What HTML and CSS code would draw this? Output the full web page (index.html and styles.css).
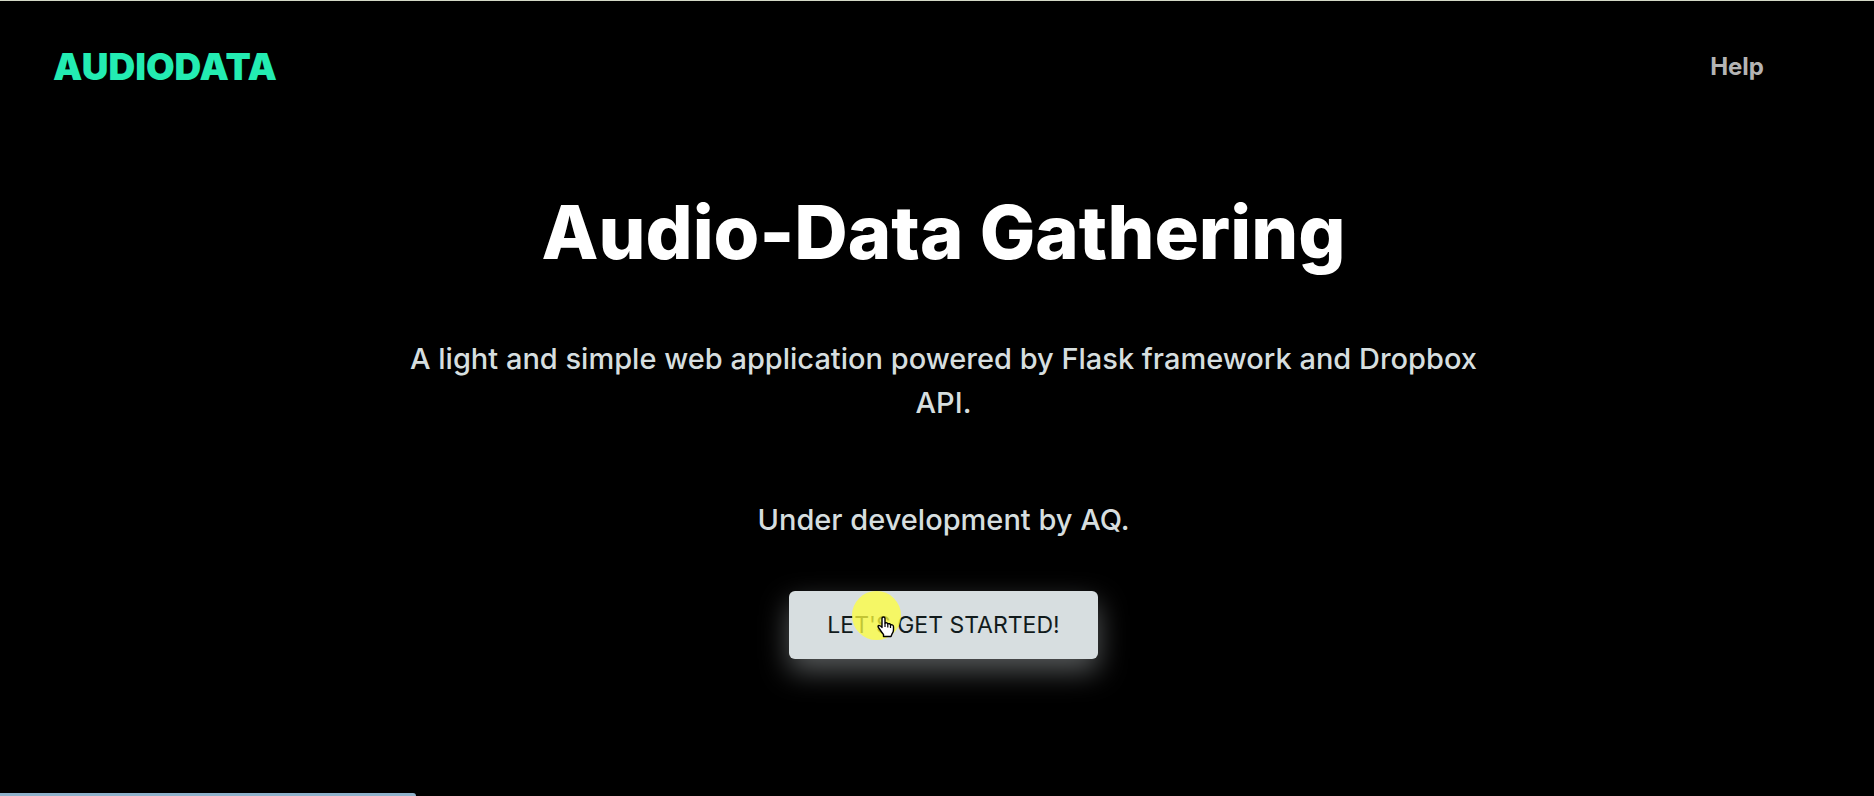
FILE: index.html
```html
<!DOCTYPE html>
<html lang="en">
<head>
<meta charset="utf-8">
<meta name="viewport" content="width=device-width, initial-scale=1">
<title>Audio-Data Gathering</title>
<link rel="stylesheet" href="styles.css">
</head>
<body>
<header class="header">
  <a class="logo" href="#">AUDIODATA</a>
  <nav class="nav"><a class="nav-link" href="#">Help</a></nav>
</header>
<main class="hero">
  <h1 class="title">Audio-Data Gathering</h1>
  <p class="lead">A light and simple web application powered by Flask framework and Dropbox API.</p>
  <p class="lead">Under development by AQ.</p>
  <div class="action">
    <button class="start" type="button">LET'S GET STARTED!</button>
    <span class="halo"></span>
    <svg class="pointer" width="18" height="22" viewBox="0 0 18 22" aria-hidden="true">
      <path d="M6.500 1C7.600 1 8 1.800 8 2.600V7c1.300-.6 2.500-.2 2.800.8 1.200-.5 2.400 0 2.700 1 1.600-.4 3 .3 3 1.900v3.300c0 1.500-.5 2.700-1.500 4l-1 2.500H6.500V18.500C5 16.800 3.800 15 2.500 13 1.500 11.700.8 11 1 10.200c.5-1.300 2.500-.8 4 1.200V2.600C5 1.800 5.400 1 6.500 1z" fill="#fff" stroke="#000" stroke-width="1.400" stroke-linejoin="round"/>
      <path d="M8 7v4M10.800 8v3.500M13.500 9v3" fill="none" stroke="#000" stroke-width="1.200"/>
    </svg>
  </div>
</main>
<div class="status"></div>
</body>
</html>
```
FILE: styles.css
```css
* { box-sizing: border-box; }
body {
  margin: 0;
  min-height: 100vh;
  display: flex;
  flex-direction: column;
  overflow: hidden;
  background: #000;
  border-top: 1px solid #d3d8c6;
  font-family: Inter, "Liberation Sans", sans-serif;
}
.header {
  display: flex;
  align-items: center;
  justify-content: space-between;
  padding: 44px 110px 0 53px;
}
.logo {
  color: #23ecb2;
  font-size: 37px;
  line-height: 44px;
  font-weight: 900;
  text-decoration: none;
}
.nav-link {
  color: #b4b4b4;
  font-size: 24px;
  line-height: 44px;
  font-weight: 700;
  text-decoration: none;
}
.hero {
  flex: 1;
  display: flex;
  flex-direction: column;
  align-items: center;
  padding: 99px 0 0 13px;
  text-align: center;
}
.title {
  margin: 0 0 61px;
  color: #fff;
  font-size: 74px;
  line-height: 88px;
  font-weight: 800;
}
.lead {
  max-width: 1110px;
  margin: 0 0 73px;
  color: #d6dedf;
  font-size: 29px;
  line-height: 44px;
  font-weight: 500;
}
.lead + .lead { margin-bottom: 49px; }
.action { position: relative; }
.start {
  display: block;
  padding: 16px 38px;
  border: 0;
  border-radius: 6px;
  background: #d7dee0;
  color: #111b1c;
  font: 400 23px/36px Inter, "Liberation Sans", sans-serif;
  box-shadow: 0 12px 29px rgba(215, 222, 224, 0.4);
  cursor: pointer;
}
.halo {
  position: absolute;
  left: 63px;
  top: 0;
  width: 49px;
  height: 49px;
  border-radius: 50%;
  background: rgba(255, 255, 60, 0.75);
  pointer-events: none;
}
.pointer {
  position: absolute;
  left: 88px;
  top: 25px;
  pointer-events: none;
}
.status {
  width: 22.2%;
  height: 3px;
  border-top-right-radius: 4px;
  background: #8fb2cb;
}
```
